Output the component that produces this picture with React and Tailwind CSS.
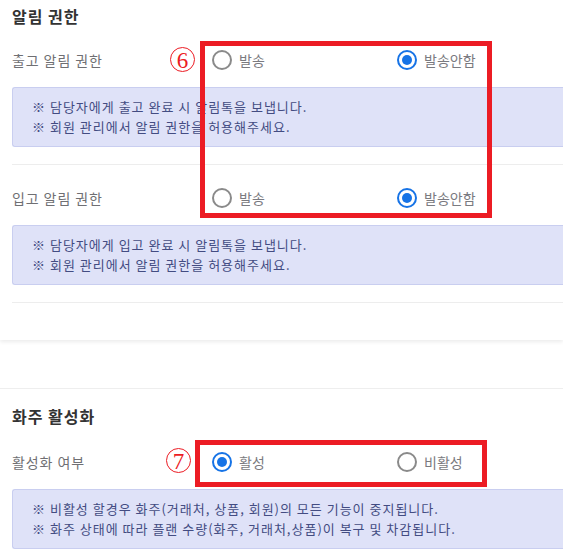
import React from 'react';

const FONT = { fontFamily: '"Noto Sans CJK KR", "Noto Sans", sans-serif' };

const Radio = ({ checked, label, className = '' }) => (
  <label className={`flex items-center gap-[7px] ${className}`}>
    <span
      className={`w-[20px] h-[20px] rounded-full border-2 flex items-center justify-center shrink-0 ${
        checked ? 'border-[#1673e6]' : 'border-[#8a8a8a]'
      }`}
    >
      {checked && <span className="w-[10px] h-[10px] rounded-full bg-[#1673e6]" />}
    </span>
    <span className="text-[14px] text-[#7a7a80] leading-none">{label}</span>
  </label>
);

const Row = ({ label, options }) => (
  <div className="flex items-center h-[40px]">
    <div className="w-[212px] text-[14px] tracking-[0.9px] text-[#6f6f73] pl-3">{label}</div>
    <div className="flex items-center">
      {options.map((o, i) => (
        <Radio key={o.label} checked={o.checked} label={o.label} className={i === 0 ? 'w-[185px]' : ''} />
      ))}
    </div>
  </div>
);

const Notice = ({ lines }) => (
  <div className="ml-3 h-[60px] bg-[#dfe2f8] border border-r-0 border-[#c9cef0] rounded-l-[3px] pl-[19px] flex flex-col justify-center">
    {lines.map((l) => (
      <p key={l} className="text-[13px] leading-[20px] tracking-[1px] text-[#434c82]">※ {l}</p>
    ))}
  </div>
);

const Divider = ({ className = '' }) => <div className={`ml-3 h-px bg-[#ededed] ${className}`} />;

const Circled = ({ n, className = '' }) => (
  <span
    className={`absolute w-[25px] h-[25px] rounded-full border-[1.5px] border-[#ec1c24] flex items-center justify-center text-[23px] leading-none text-[#ec1c24] ${className}`}
    style={{ fontFamily: '"Liberation Serif", serif' }}
  >
    <span className="translate-y-[1px]">{n}</span>
  </span>
);

export default function App() {
  return (
    <div className="relative w-[563px] h-[556px] overflow-hidden bg-white" style={FONT}>
      <div className="bg-white pt-1 pb-[37px] shadow-[0_2px_4px_rgba(0,0,0,0.08)]">
        <h2 className="pl-3 text-[16px] leading-[24px] font-semibold tracking-[1px] text-[#333]">알림 권한</h2>
        <div className="mt-3">
          <Row
            label="출고 알림 권한"
            options={[{ label: '발송' }, { label: '발송안함', checked: true }]}
          />
        </div>
        <div className="mt-[7px]">
          <Notice lines={['담당자에게 출고 완료 시 알림톡을 보냅니다.', '회원 관리에서 알림 권한을 허용해주세요.']} />
        </div>
        <Divider className="mt-[17px]" />
        <div className="mt-[13px]">
          <Row
            label="입고 알림 권한"
            options={[{ label: '발송' }, { label: '발송안함', checked: true }]}
          />
        </div>
        <div className="mt-[7px]">
          <Notice lines={['담당자에게 입고 완료 시 알림톡을 보냅니다.', '회원 관리에서 알림 권한을 허용해주세요.']} />
        </div>
        <Divider className="mt-[17px]" />
      </div>

      <div className="mt-[48px] border-t border-[#eeeeee] pt-[15px]">
        <h2 className="pl-3 text-[16px] leading-[24px] font-semibold tracking-[1px] text-[#333]">화주 활성화</h2>
        <div className="mt-[14px]">
          <Row
            label="활성화 여부"
            options={[{ label: '활성', checked: true }, { label: '비활성' }]}
          />
        </div>
        <div className="mt-[7px]">
          <Notice
            lines={[
              '비활성 할경우 화주(거래처, 상품, 회원)의 모든 기능이 중지됩니다.',
              '화주 상태에 따라 플랜 수량(화주, 거래처,상품)이 복구 및 차감됩니다.',
            ]}
          />
        </div>
      </div>

      {/* annotation overlays */}
      <div className="absolute left-[200px] top-[41px] w-[292px] h-[177px] border-[5px] border-[#ec1c24]" />
      <Circled n="6" className="left-[170px] top-[47px]" />
      <div className="absolute left-[195px] top-[440px] w-[292px] h-[47px] border-[5px] border-[#ec1c24]" />
      <Circled n="7" className="left-[166px] top-[448px]" />
    </div>
  );
}
